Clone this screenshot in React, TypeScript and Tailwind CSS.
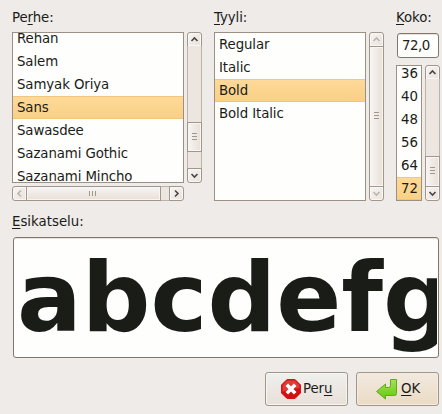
import React from 'react';

type Dir = 'up' | 'down' | 'left' | 'right';

const chevrons: Record<Dir, string> = {
  up: 'M3.5 8 L6.5 5 L9.5 8',
  down: 'M3.5 5 L6.5 8 L9.5 5',
  left: 'M8 3.5 L5 6.5 L8 9.5',
  right: 'M5 3.5 L8 6.5 L5 9.5',
};

const corners: Record<Dir, string> = {
  up: 'rounded-t-[3px]',
  down: 'rounded-b-[3px]',
  left: 'rounded-l-[3px]',
  right: 'rounded-r-[3px]',
};

function Arrow({ dir, disabled }: { dir: Dir; disabled?: boolean }) {
  return (
    <div
      className={`size-[15px] shrink-0 border border-[#a1968a] bg-linear-to-br from-[#f6f5f4] to-[#eae1db] shadow-[inset_0_0_0_1px_#faf8f7] ${corners[dir]}`}
    >
      <svg viewBox="0 0 13 13" className="block size-[13px]">
        <path d={chevrons[dir]} fill="none" stroke={disabled ? '#bdb4ac' : '#4a4541'} strokeWidth="1.6" />
      </svg>
    </div>
  );
}

function VScroll({ before, thumb, disabled }: { before: string; thumb: string; disabled?: boolean }) {
  return (
    <div className="flex w-[15px] shrink-0 flex-col">
      <Arrow dir="up" disabled={disabled} />
      <div className="-my-px flex min-h-0 flex-1 flex-col border-x border-[#bdb2a8] bg-[#ede5e0]">
        <div className={`shrink-0 ${before}`} />
        <div
          className={`-mx-px flex shrink-0 flex-col items-center justify-center gap-[2px] border border-[#a1968a] bg-linear-to-r from-[#f6f5f4] to-[#e9dfd8] pb-[2px] shadow-[inset_0_0_0_1px_#f8f5f3] ${thumb}`}
        >
          <i className="h-px w-[5px] bg-[#a1968a]" />
          <i className="h-px w-[5px] bg-[#a1968a]" />
          <i className="h-px w-[5px] bg-[#a1968a]" />
        </div>
      </div>
      <Arrow dir="down" disabled={disabled} />
    </div>
  );
}

function HScroll() {
  return (
    <div className="flex h-[15px] w-[172px]">
      <Arrow dir="left" disabled />
      <div className="-mx-px flex min-w-0 flex-1 border-y border-[#bdb2a8] bg-[#ede5e0]">
        <div className="-my-px flex h-[15px] w-[135px] items-center justify-center gap-[2px] border border-[#a1968a] bg-linear-to-b from-[#f6f5f4] to-[#e9dfd8] pr-[2px] shadow-[inset_0_0_0_1px_#f8f5f3]">
          <i className="h-[5px] w-px bg-[#a1968a]" />
          <i className="h-[5px] w-px bg-[#a1968a]" />
          <i className="h-[5px] w-px bg-[#a1968a]" />
        </div>
      </div>
      <Arrow dir="right" />
    </div>
  );
}

function List({ items, selected, size, shift }: { items: string[]; selected: string; size: string; shift?: string }) {
  return (
    <div className={`shrink-0 overflow-hidden border border-[#9c9084] bg-[#fefefd] ${size}`}>
      <div className={shift}>
        {items.map((t) => (
          <div
            key={t}
            className={`h-[23px] pl-1 leading-[23px] ${
              t === selected
                ? 'bg-linear-to-b from-[#fed99a] to-[#f9d083] shadow-[inset_0_1px_0_#f5c77c,inset_0_-1px_0_#f3c57a]'
                : ''
            }`}
          >
            {t}
          </div>
        ))}
      </div>
    </div>
  );
}

function Label({ pre = '', k, post }: { pre?: string; k: string; post: string }) {
  return (
    <span className="whitespace-pre">
      {pre}
      <span className="underline decoration-1 underline-offset-2 [text-decoration-skip-ink:none]">{k}</span>
      {post}
    </span>
  );
}

export default function App() {
  return (
    <div className="h-[414px] w-[442px] overflow-hidden bg-[#efebe9] pl-3 font-['DejaVu_Sans',sans-serif] text-[13.333px] tracking-[-0.1px] text-[#1a1c18]">
      <div className="flex h-[201px]">
        <div className="flex w-[202px] shrink-0 flex-col">
          <div className="h-8 pt-[9px] leading-[18px]"><Label pre="Pe" k="r" post="he:" /></div>
          <div className="flex h-[151px] gap-[3px]">
            <List
              items={['Rehan', 'Salem', 'Samyak Oriya', 'Sans', 'Sawasdee', 'Sazanami Gothic', 'Sazanami Mincho']}
              selected="Sans"
              size="h-[151px] w-[172px]"
              shift="-mt-[6px]"
            />
            <VScroll before="h-[76px]" thumb="h-[30px]" />
          </div>
          <div className="mt-[3px]"><HScroll /></div>
        </div>
        <div className="w-[182px] shrink-0">
          <div className="h-8 pt-[9px] leading-[18px]"><Label k="T" post="yyli:" /></div>
          <div className="flex h-[169px] gap-[3px]">
            <List items={['Regular', 'Italic', 'Bold', 'Bold Italic']} selected="Bold" size="h-[169px] w-[152px]" />
            <VScroll before="h-0" thumb="h-[141px]" disabled />
          </div>
        </div>
        <div className="w-11 shrink-0">
          <div className="h-8 pt-[9px] leading-[18px]"><Label k="K" post="oko:" /></div>
          <div className="mt-px ml-px h-[25px] w-[42px] rounded-[3px] border border-[#83776c] bg-[#fefefd] pl-1 leading-[23px] tracking-[-0.5px] shadow-[inset_0_1px_0_#e5e1dc]">72,0</div>
          <div className="mt-[7px] flex h-[136px] gap-[3px]">
            <List items={['36', '40', '48', '56', '64', '72']} selected="72" size="h-[136px] w-[26px]" shift="-mt-[4px]" />
            <VScroll before="h-[77px]" thumb="h-[31px]" />
          </div>
        </div>
      </div>

      <div className="h-9 pt-3 leading-[18px] tracking-normal"><Label k="E" post="sikatselu:" /></div>
      <div className="ml-px h-[121px] w-[426px] rounded-[3px] border border-[#83776c] bg-[#fefefd] px-px shadow-[inset_0_1px_0_#e5e1dc]">
        <div className="h-[119px] overflow-hidden pl-[2px] text-[96px] leading-[121px] font-bold tracking-normal whitespace-nowrap">abcdefg</div>
      </div>

      <div className="mt-[14px] flex justify-end gap-2 pr-[3px]">
        <button className="flex h-[34px] w-[83px] items-center rounded-[3px] border border-[#a1968a] bg-linear-to-b from-[#eff0ee] to-[#e9dfd8] pl-[14px] shadow-[inset_0_0_0_1px_#f8f5f3]">
          <svg viewBox="0 0 22 22" className="mr-px size-[22px] shrink-0">
            <path d="M7 1.5h8L20.5 7v8L15 20.5H7L1.5 15V7z" fill="#d60d0d" stroke="#d01616" strokeLinejoin="round" />
            <path d="M7.2 2.6h7.6l4.6 4.6v3.3Q10 9 2.6 14V7.2z" fill="#e13a3a" />
            <path d="M6.8 6.8l8.4 8.4M15.2 6.8l-8.4 8.4" stroke="#fff" strokeWidth="3.6" />
          </svg>
          <Label pre="Per" k="u" post="" />
        </button>
        <button className="flex h-[34px] w-[83px] items-center rounded-[3px] border border-[#a1968a] bg-linear-to-b from-[#f2e9e0] to-[#eadbc4] pl-[18px] shadow-[inset_0_0_0_1px_#f7ecdc]">
          <svg viewBox="0 0 23 22" className="mr-[3px] h-[22px] w-[23px] shrink-0">
            <defs>
              <linearGradient id="enter" x1="0" y1="0" x2="0" y2="1">
                <stop offset="0" stopColor="#a3e357" />
                <stop offset="1" stopColor="#65c80c" />
              </linearGradient>
            </defs>
            <path d="M15.5 1.5h6v14q0 2-2 2h-9v3.5L1.5 13.5 10.5 6v3.5h3q2 0 2-2z" fill="url(#enter)" stroke="#62a81c" strokeLinejoin="round" />
          </svg>
          <Label k="O" post="K" />
        </button>
      </div>
    </div>
  );
}
